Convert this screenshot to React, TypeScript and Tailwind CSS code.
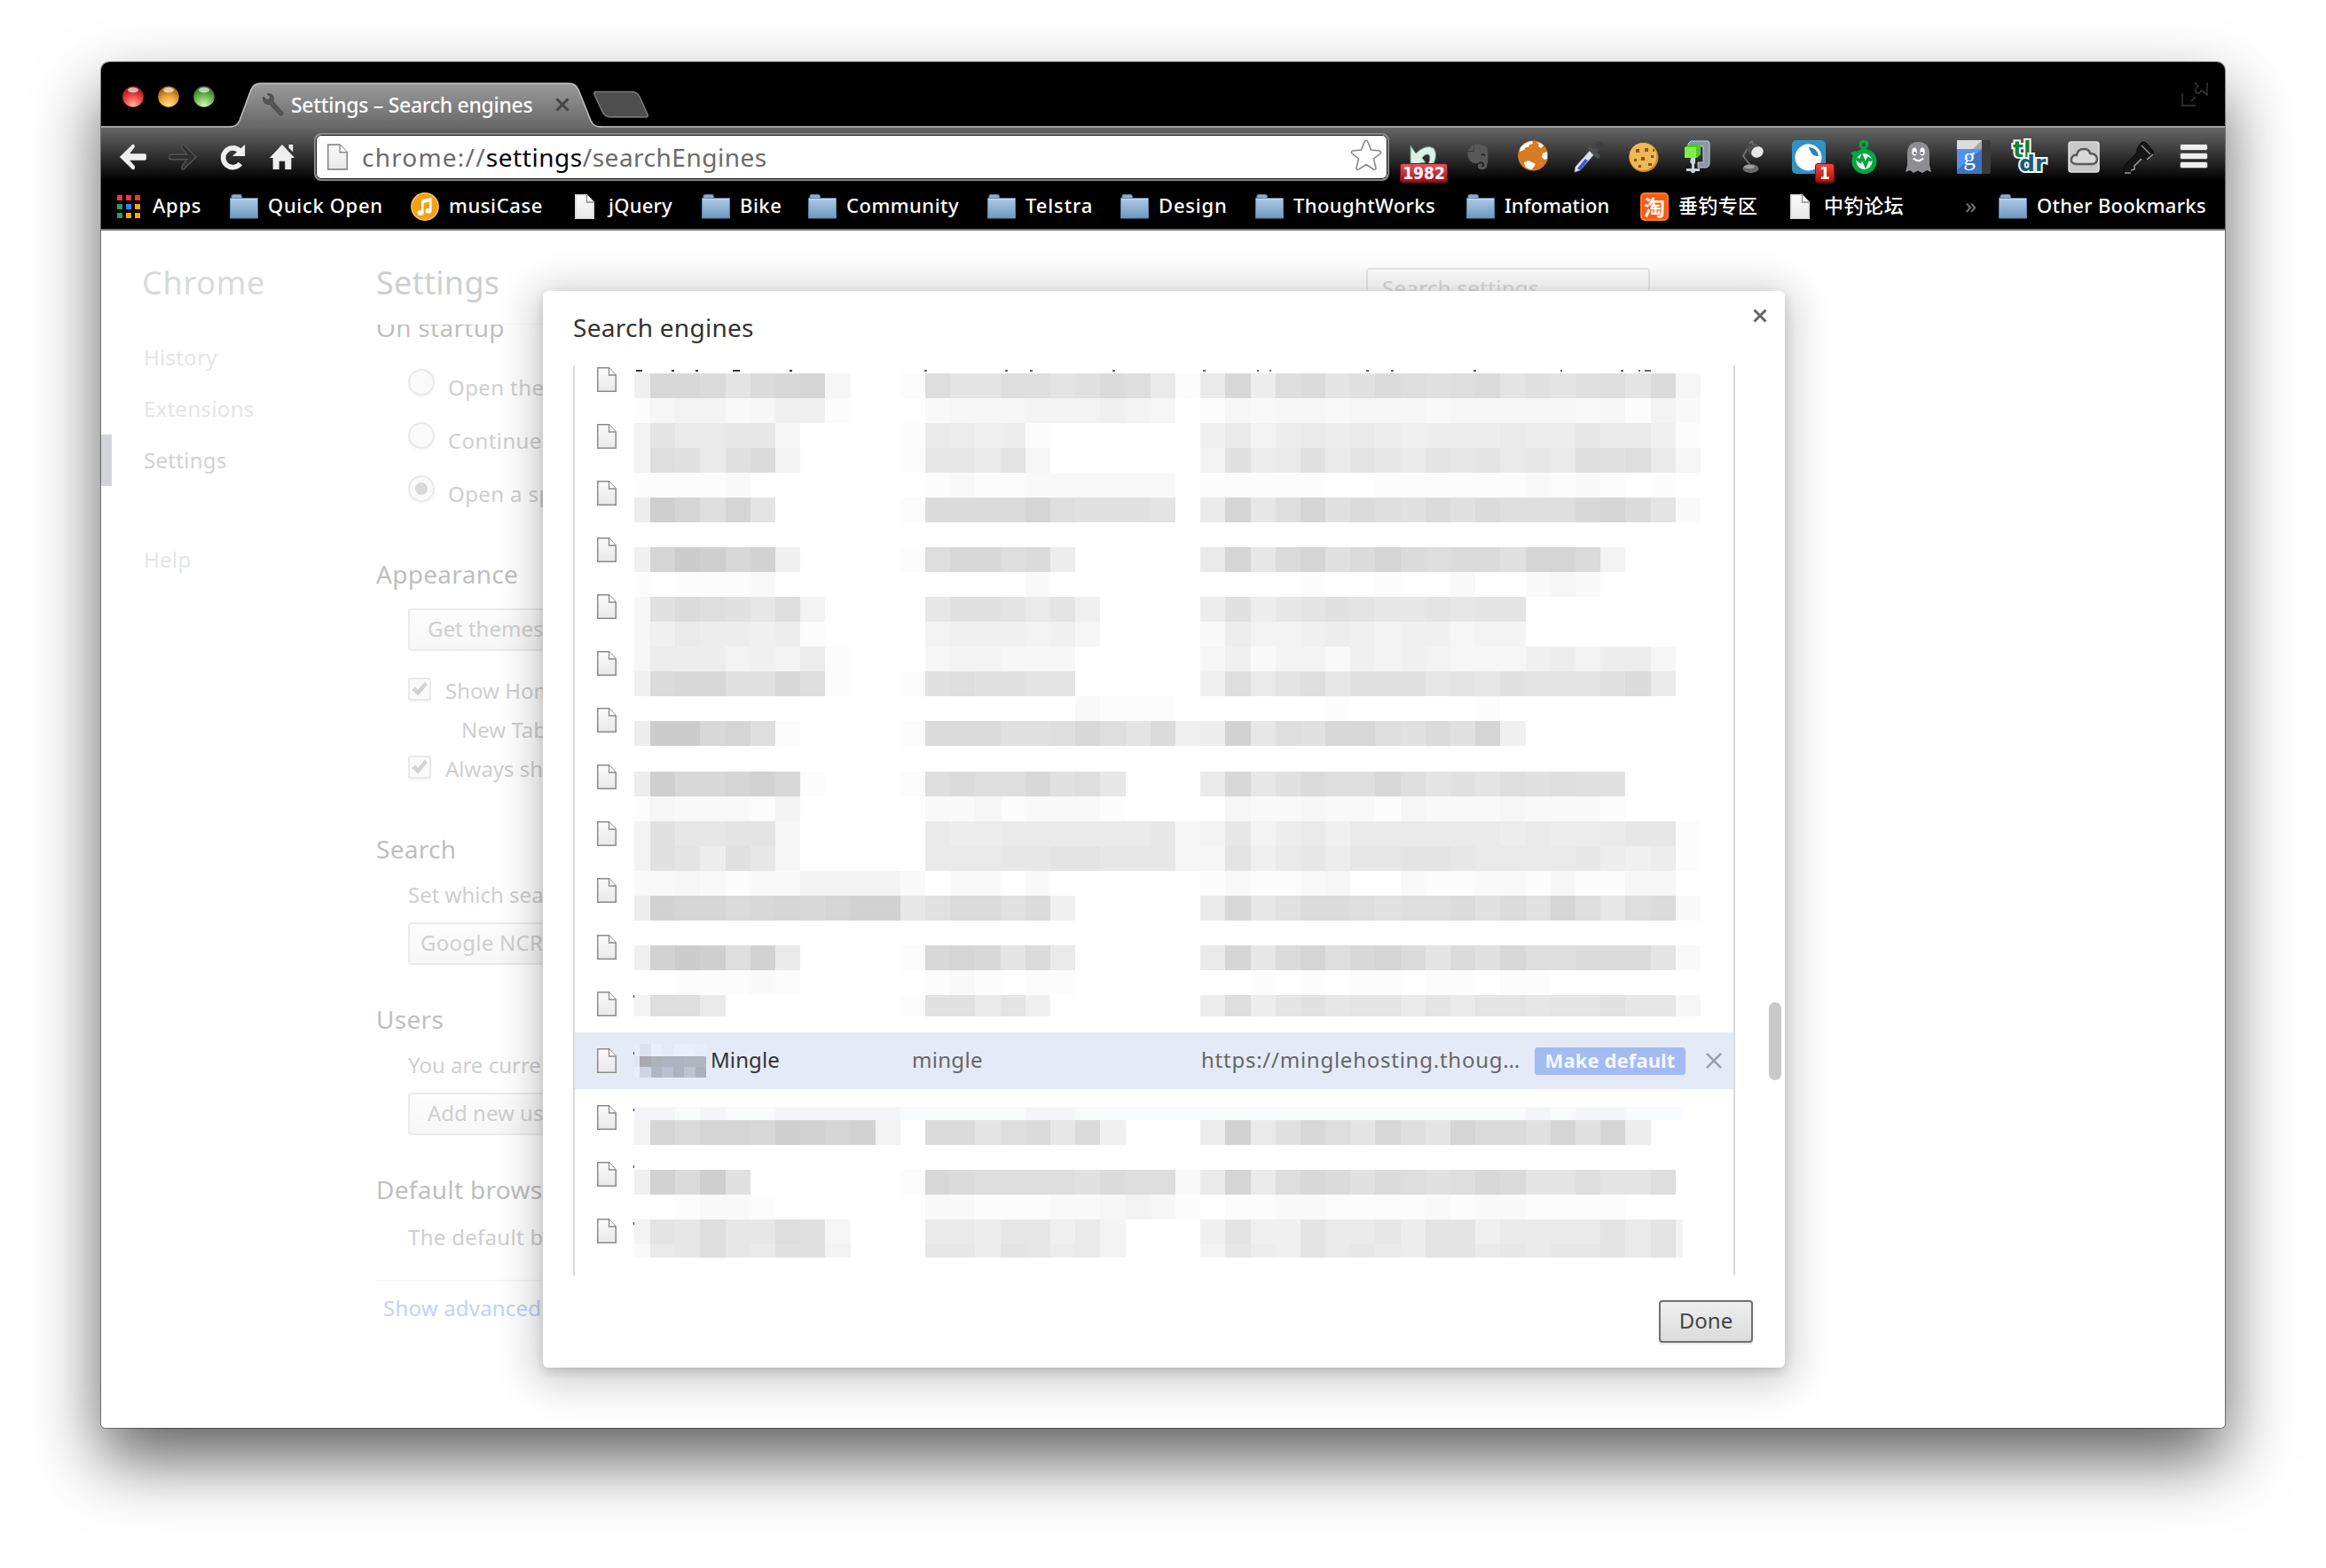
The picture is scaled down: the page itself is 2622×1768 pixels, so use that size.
import React from "react";

function T({ t, c = "" }: { t: string; c?: string }) {
  return <span className={"whitespace-pre " + c}>{t}</span>;
}

/* Pixelated block data: one character per cell, darker as the index grows. */
const PALETTE = "0123456789abcdefgh";
const cellColor = (ch: string) => {
  if (ch === "x") return "#f7fafe";
  if (ch === "y") return "#f3f5f9";
  const v = 255 - 3 * PALETTE.indexOf(ch);
  return `rgb(${v},${v},${v})`;
};
const BLANK = "0".repeat(43);
const M1 = [
  "5ddc9cde3001b99bb9acb717d6bc9acbabc9a9ab9c3",
  "1344235510002333444543013233233323333323142",
  "4977883000017656100000057467676566676687751",
  "4ba7ac400001887930000004a67a7987989787bab73",
  "1111200000001211222222011111001111112121010",
  "6gebe9000001ccccebaaa907e8beacbacacbbbdec92",
  BLANK,
  "5ehgdf500001bddbc6000007e8ceacecbccaeec4000",
  "1011120000000000200000000001001002002320000",
  "3acba8b400008aa979500006a689a98898990000000",
  "3576656100004555453000026445654553440000000",
  "3666454610003443330000035244254543335646630",
  "5cddaadb1001abaa99000005b79b8aaa898a999ac70",
  "0000000000000000002111000000100000100000000",
  "6hhdeb100001cccaabdb9c56f8baddbacae50000000",
  BLANK,
  "6gddefd10001bcbbdab80007d8acbbdb9a9babaa000",
  "1322214000002231222100003223221322232221000",
  "4a88993000007667777778348467577777767667881",
  "4a96a83000007778899888339578688998777786561",
  "2232122444420220200000012112300211221311330",
  "6feecdedeff8accac5000007d8accbabbcacaeb8bc2",
  BLANK,
  "5fhgbf700001ded9c7000007e8cebdec9cadbbccc92",
  "0011121000001210110000000101011011011000000",
  "4bb700000001aa7950000006b69a89979799899a883",
];
const M2 = [
  "yyxyxxyyyyyxxxxxyyxxxxxxxxxxxxxxxxxxyxyyxxx",
  "4eceedgfef40cc9bc8c50006f7adb9db9eccaeae600",
  BLANK,
  "5fcga0000001dcbbbbacbb27e7bdcacbabdc99b99b0",
  "0012210000002211122343101122111121221111000",
  "498b88ba30007768857400059559778699577779794",
  "278b87aa40008869867400048659787699787889794",
];

function Mosaic({ rows, c, first = "h-[28.04px]" }: { rows: string[]; c: string; first?: string }) {
  return (
    <div className={"absolute overflow-hidden " + c}>
      {rows.map((r, i) => (
        <div key={i} className={"flex " + (i === 0 ? first : "h-[28.04px]")}>
          {r.split("").map((ch, j) => (
            <div key={j} className={"h-full shrink-0 " + (j === 0 ? "w-[18px]" : "w-[28.19px]")} style={{ backgroundColor: cellColor(ch) }} />
          ))}
        </div>
      ))}
    </div>
  );
}

function PageIcon({ c = "w-[22px] h-[28px]", k = "#8b8b8b" }: { c?: string; k?: string }) {
  return (
    <svg viewBox="0 0 22 28" className={"shrink-0 " + c}>
      <defs>
        <linearGradient id="pg" x1="0" y1="0" x2="0" y2="1">
          <stop offset="0" stopColor="#fbfbfb" />
          <stop offset="1" stopColor="#e9e9e9" />
        </linearGradient>
      </defs>
      <path d="M.75 .75H13.5L21.25 9V27.25H.75Z" fill="url(#pg)" stroke={k} strokeWidth="1.5" />
      <path d="M13.5 .75V9H21.25" fill="#fff" stroke="#8b8b8b" strokeWidth="1.3" />
    </svg>
  );
}

function Folder() {
  return (
    <svg viewBox="0 0 32 28" className="h-7 w-8 shrink-0">
      <defs>
        <linearGradient id="fo" x1="0" y1="0" x2="0" y2="1">
          <stop offset="0" stopColor="#b0c9e2" />
          <stop offset="1" stopColor="#6c99c3" />
        </linearGradient>
      </defs>
      <path d="M2 5V2.2Q2 .5 3.7 .5H11.6Q13.3 .5 13.3 2.2V5Z" fill="#8eacca" stroke="#6486a8" />
      <path d="M.5 4.500H31.500V27H.5Z" fill="url(#fo)" stroke="#5e86ae" />
      <path d="M1 5.500H31" stroke="#c9dbed" />
    </svg>
  );
}

function Apps() {
  const cols = ["#f8372f", "#f8372f", "#f8372f", "#2f9e58", "#2f86f6", "#f4a70a", "#2f9e58", "#f4a70a", "#f4a70a"];
  return (
    <div className="grid w-8 shrink-0 grid-cols-[6px_6px_6px] justify-center gap-1">
      {cols.map((k, i) => (
        <div key={i} className="h-[6px]" style={{ backgroundColor: k }} />
      ))}
    </div>
  );
}

function Music() {
  return (
    <svg viewBox="0 0 32 32" className="size-8 shrink-0">
      <circle cx="16" cy="16" r="15.2" fill="#f59f13" stroke="#f8c56a" strokeWidth="1.4" />
      <path d="M12 8.200L23.500 6V20.500H21V10.600L14.500 12V23H12Z" fill="#fff" />
      <ellipse cx="11" cy="23" rx="3.6" ry="2.900" fill="#fff" />
      <ellipse cx="20" cy="20.700" rx="3.600" ry="2.900" fill="#fff" />
    </svg>
  );
}

function Taobao() {
  return (
    <div className="relative flex size-8 shrink-0 items-center justify-center rounded-[5px] border-2 border-[#ff7a3a] bg-[#ff5a0c] font-['Noto_Sans_CJK_SC',sans-serif] text-[24px] leading-none font-bold text-white">
      淘
    </div>
  );
}

const pageMark = (
  <div className="flex w-8 shrink-0 justify-center">
    <PageIcon k="#d8d8d8" />
  </div>
);

const bookmarks = [
  { w: "w-[130px]", i: <Apps />, t: "Apps", k: "tracking-[0.7px]" },
  { w: "w-[204px]", i: <Folder />, t: "Quick Open", k: "tracking-[0.65px]" },
  { w: "w-[180px]", i: <Music />, t: "musiCase", k: "tracking-[0.6px]" },
  { w: "w-[148px]", i: pageMark, t: "jQuery", k: "tracking-[0.22px]" },
  { w: "w-[120px]", i: <Folder />, t: "Bike", k: "tracking-[0.5px]" },
  { w: "w-[202px]", i: <Folder />, t: "Community", k: "tracking-[0.5px]" },
  { w: "w-[150px]", i: <Folder />, t: "Telstra", k: "tracking-[0.9px]" },
  { w: "w-[152px]", i: <Folder />, t: "Design", k: "tracking-[0.8px]" },
  { w: "w-[238px]", i: <Folder />, t: "ThoughtWorks", k: "tracking-[0.4px]" },
  { w: "w-[196px]", i: <Folder />, t: "Infomation", k: "tracking-[0.05px]" },
  { w: "w-[164px]", i: <Taobao />, t: "垂钓专区", k: "tracking-[0.33px]" },
  { w: "w-[201px]", i: pageMark, t: "中钓论坛", k: "tracking-[0.6px]" },
];

const S = "h-[38px] w-[38px]";

const extensions = [
  <svg viewBox="0 0 38 38" className={S}>
    <path d="M4 6L4 28L21 25L17 20Q22 14 25 17Q27 20 24 27H30Q35 15 30 9Q21 4 10 15Z" fill="#dff0e6" stroke="#5d9a7c" strokeWidth="1" />
  </svg>,
  <svg viewBox="0 0 38 38" className={S}>
    <path d="M6 12L13 5V12ZM14 5Q20 3 23 6Q28 6 28.500 9Q30.500 20 28 30Q26 34 21 33Q17 32 18 28Q20 25 23 27V29H21.500Q22 31 24 30Q26 29 24 25Q20 23 18 26Q11 27 8 22Q6 18 6 13H14Z" fill="#585858" />
    <path d="M22 17Q24 14.500 26 18" stroke="#222" strokeWidth="1.500" fill="none" />
  </svg>,
  <svg viewBox="0 0 38 38" className={S}>
    <circle cx="18" cy="17.500" r="17" fill="#d97b22" />
    <path d="M4 8Q10 2 17 1L18 4L14 5L13 8L10 8L8 11L3 13ZM22 2Q27 3 30 6L27 9L24 7L25 5ZM29 15L34 13V21L31 22L28 19ZM8 25L13 23L21 27L17 33Q12 33 9 29Z" fill="#fff" />
  </svg>,
  <svg viewBox="0 0 38 38" className={S}>
    <path d="M4 30L20 12L25 16L9 34L3 36Z" fill="#dfe4ea" stroke="#9aa0a8" strokeWidth=".8" />
    <path d="M6 32L15 21L18 23L9 34Z" fill="#2f5fd6" />
    <path d="M20 9L29 18M25 13L32 5" stroke="#4d4d50" strokeWidth="5" strokeLinecap="round" />
    <circle cx="31" cy="6" r="5" fill="#3f3f42" />
  </svg>,
  <svg viewBox="0 0 38 38" className={S}>
    <circle cx="19" cy="19.500" r="16.500" fill="#c98a22" />
    <circle cx="18" cy="18.500" r="15.500" fill="#efb755" />
    <g fill="#8b5418">
      <rect x="10" y="10" width="4" height="4" /><rect x="20" y="9" width="4" height="4" /><rect x="16" y="19" width="4" height="4" />
      <rect x="27" y="17" width="3" height="3" /><rect x="8" y="21" width="3" height="3" /><rect x="24" y="26" width="4" height="3" /><rect x="13" y="28" width="3" height="3" /><rect x="29" y="10" width="2" height="3" />
    </g>
  </svg>,
  <svg viewBox="0 0 38 38" className={S}>
    <path d="M7 4L10 1H29Q31 1 31 4V26Q31 31 26 31H18V25H24V7H7Z" fill="#8a97a3" stroke="#c7cfd6" strokeWidth="1" />
    <path d="M3 8L8 5H21V16L17 20H3Z" fill="#4fc924" />
    <path d="M3 8H16V20H3Z" fill="#7ef04a" />
    <path d="M10 20H15V26L14 27V32H20V35H15L14 37H11L10 35H5V32H11V27L9 25Z" fill="#c9d3dc" />
  </svg>,
  <svg viewBox="0 0 38 38" className={S}>
    <path d="M14 4L17 1L18 5L25 7M12 9L7 18L15 28" fill="none" stroke="#6f6f6f" strokeWidth="2" />
    <path d="M11 8Q18 3 26 7L18 18Q12 15 11 8Z" fill="#4f4f4f" />
    <ellipse cx="23" cy="13.500" rx="7" ry="6" transform="rotate(-30 23 13.500)" fill="#e8e8e8" />
    <ellipse cx="15.500" cy="32" rx="9" ry="5" fill="#6a6a6a" />
    <ellipse cx="14" cy="30" rx="6" ry="2" fill="#a0a0a0" />
  </svg>,
  <svg viewBox="0 0 38 38" className={S}>
    <rect width="38" height="38" rx="5" fill="#2f93c4" />
    <circle cx="18.500" cy="19.500" r="15" fill="#fff" />
    <path d="M19 8Q28 8 30 18Q22 19 19 8Z" fill="#2f7fb0" />
  </svg>,
  <svg viewBox="0 0 38 38" className={S}>
    <path d="M16 8Q14 1 19 1.500Q24 1 22 8" fill="none" stroke="#0aa543" strokeWidth="3.500" />
    <path d="M4 14L10 12L11 17L7 18Z" fill="#0aa543" />
    <circle cx="19.500" cy="24" r="14" fill="#0aa543" />
    <circle cx="19.500" cy="24" r="9" fill="#e9f7ee" />
    <path d="M11 21L15 24L17 19L21 28L24 21L28 23" fill="none" stroke="#0a9f40" strokeWidth="3.500" />
    <path d="M16 7H22V11H16Z" fill="#0aa543" />
  </svg>,
  <svg viewBox="0 0 38 38" className={S}>
    <path d="M6 14Q7 2 18 2Q30 2 31 14V28L33 36L28 34L23 37L18 34.500L13 37L9 34L4 36L6 28Z" fill="#8d8d92" />
    <ellipse cx="14" cy="13" rx="2.700" ry="4.500" fill="#fff" /><ellipse cx="23" cy="13" rx="2.700" ry="4.500" fill="#fff" />
    <circle cx="14.500" cy="14.500" r="1.300" fill="#555" /><circle cx="22.500" cy="14.500" r="1.300" fill="#555" />
    <path d="M13 20.500Q18.500 26 24 20.500" fill="none" stroke="#fff" strokeWidth="2" />
  </svg>,
  <div className={"relative flex items-end rounded-[2px] bg-[#3c3a3b] pb-[5px] " + S}>
    <svg viewBox="0 0 38 38" className="absolute inset-0 size-full">
      <path d="M0 0H28V38H0Z" fill="#3f73bd" /><path d="M0 10H28L0 34Z" fill="#4f94f5" /><path d="M0 0H28V10H0Z" fill="#dcdcdc" /><path d="M28 0V10H18Z" fill="#a8a8a8" />
    </svg>
    <span className="relative w-7 text-center font-['Liberation_Serif',serif] text-[27px] leading-[28px] text-white">g</span>
  </div>,
  <div className={"relative font-['DejaVu_Sans',sans-serif] text-[25px] leading-none font-bold " + S}>
    <span className="absolute top-[-2px] left-[1px] text-[#157f3b] [-webkit-text-stroke:4px_white] [paint-order:stroke_fill]">tl</span>
    <span className="absolute top-[14px] left-[8px] text-[#185a78] [-webkit-text-stroke:4px_white] [paint-order:stroke_fill]">dr</span>
  </div>,
  <svg viewBox="0 0 38 38" className={S}>
    <rect x="2" y="2" width="34" height="34" rx="3" fill="#c9c9c9" stroke="#e4e4e4" strokeWidth="1.500" />
    <path d="M10 27Q4 26 5 21Q7 16 11 17Q12 10 19 10Q25 10 26 15Q33 15 34 21Q34 27 28 27Z" fill="#d9d9d9" stroke="#5a5a5a" strokeWidth="2.400" />
  </svg>,
  <svg viewBox="0 0 38 38" className={S}>
    <path d="M22 3Q24 1 27 3L35 12Q36 15 34 17L28 22Q25 23 23 20L14 29V32L10 33L8 36H2V30L17 14Q16 9 22 3Z" fill="#151515" stroke="#050505" />
    <path d="M22 6L32 16" stroke="#9a9a9a" strokeWidth="1.200" />
    <path d="M3 37H10M10 34L14 33V29L22 21M28 22L35 16" stroke="#9f9f9f" strokeWidth="1.500" fill="none" />
  </svg>,
  <svg viewBox="0 0 38 38" className={S}>
    <g fill="#efefef" stroke="#555" strokeWidth="1"><rect x="3.500" y="4.500" width="31" height="7" rx="2" /><rect x="3.500" y="14.500" width="31" height="7" rx="2" /><rect x="3.500" y="24.500" width="31" height="7" rx="2" /></g>
  </svg>,
];

function Badge({ t, c }: { t: string; c: string }) {
  return (
    <span className={"absolute top-[114px] z-10 flex h-[22px] items-center justify-center rounded-[3px] border border-[#8a0a16] bg-linear-to-b font-['DejaVu_Sans_Condensed','DejaVu_Sans',sans-serif] text-[19px] font-bold text-white " + c}>{t}</span>
  );
}

function Lights() {
  const l = [
    ["#fb4b46", "#ffb3ac", "#a5201c"],
    ["#f2a437", "#ffe58f", "#a8671a"],
    ["#79c257", "#d5f3b4", "#3f7d2c"],
  ];
  return (
    <div className="flex gap-4">
      {l.map(([a, b, d], i) => (
        <svg key={i} viewBox="0 0 24 24" className="size-6">
          <defs>
            <radialGradient id={"l" + i} cx=".5" cy=".9" r=".75">
              <stop offset="0" stopColor={b} /><stop offset=".55" stopColor={a} /><stop offset="1" stopColor={d} />
            </radialGradient>
          </defs>
          <circle cx="12" cy="12" r="11.800" fill={`url(#l${i})`} />
          <ellipse cx="12" cy="4.500" rx="6" ry="3" fill="#fff" opacity=".65" />
        </svg>
      ))}
    </div>
  );
}

function Cross({ c, k, w = 3 }: { c: string; k: string; w?: number }) {
  return (
    <svg viewBox="0 0 16 16" className={c}>
      <path d="M1.500 1.500L14.500 14.500M14.500 1.500L1.500 14.500" stroke={k} strokeWidth={w} />
    </svg>
  );
}

function Radio({ on }: { on?: boolean }) {
  return (
    <span className="mt-[9px] mr-[15px] flex size-[30px] shrink-0 items-center justify-center rounded-full border-2 border-[#e9e9e9] bg-[#fafafa] shadow-[0_2px_2px_#f6f6f6]">
      {on && <span className="size-[14px] rounded-full bg-[#d9d9d9]" />}
    </span>
  );
}

function Check() {
  return (
    <span className="mt-[7px] mr-4 flex size-[26px] shrink-0 items-center justify-center rounded-[3px] border-2 border-[#e9e9e9] bg-[#fafafa] shadow-[0_2px_2px_#f6f6f6]">
      <svg viewBox="0 0 22 22" className="size-[22px]"><path d="M2.500 12L6 8.500L9 12L17 2.500L19.500 6L9.500 18.500Z" fill="#d2d2d2" /></svg>
    </span>
  );
}

const H = "h-[40px] text-[28px] leading-[40px] tracking-[0.3px] text-[#bfbfbf] whitespace-nowrap";
const P = "text-[24px] text-[#cfcfcf] whitespace-nowrap";
const BTN = "ml-[36px] h-12 w-60 rounded-[4px] border-2 border-[#ebebeb] bg-linear-to-b from-[#fdfdfd] to-[#f7f7f7] leading-[42px] ";

/* Tips of the first row's letters that stay visible above the pixelated area: x, width, dark flag. */
const topMarks = [
  [717, 7, 1], [757, 3, 1], [784, 3, 1], [826, 8, 1], [890, 3, 1], [1042, 3, 0], [1133, 3, 0], [1161, 3, 0], [1254, 3, 0],
  [1356, 3, 0], [1417, 2, 0], [1431, 2, 0], [1540, 3, 0], [1568, 3, 0], [1661, 3, 0], [1759, 2, 0], [1827, 3, 0], [1847, 2, 0], [1854, 7, 0],
];

const nameCells = [
  "#e6eefa", "#dbe3ee", "#e8effd", "#e4ebf7", "#e8effd", "#e8effd", "#e6eefa",
  "#dfe7f3", "#a9aab1", "#abb3b8", "#adb3bf", "#adb3bd", "#b0b6c0", "#b1b7c0",
  "#e6eefa", "#cfd5e2", "#b2b6c2", "#bac0cd", "#aeb2be", "#bcc2cf", "#abb1bb",
];

export default function App() {
  return (
    <div className="h-[1768px] w-[2622px] overflow-hidden bg-white px-[114px] pt-[70px] font-['Noto_Sans',sans-serif]">
      <div className="relative flex h-[1540px] w-[2394px] flex-col rounded-t-[9px] rounded-b-[5px] shadow-[0_0_0_1px_rgba(0,0,0,0.4),0_36px_76px_rgba(0,0,0,0.62)]">
        <div className="flex h-[190px] flex-col overflow-hidden rounded-t-[9px] border-b-2 border-[#777] bg-black">
          <div className="relative h-[72px] shrink-0">
            <div className="flex h-full items-start pt-[27px] pl-6"><Lights /></div>
            <svg viewBox="0 0 480 52" className="absolute top-[22px] left-[145px] h-[52px] w-[480px]">
              <defs>
                <linearGradient id="tab" x1="0" y1="0" x2="0" y2="1"><stop offset="0" stopColor="#9b9b9b" /><stop offset="1" stopColor="#676767" /></linearGradient>
              </defs>
              <path d="M0 51Q8 51 11 44L24 9Q27 2 35 2H382Q390 2 393 9L407 44Q410 51 418 51V52H0Z" fill="url(#tab)" />
              <path d="M0 51Q8 51 11 44L24 9Q27 2 35 2H382Q390 2 393 9L407 44Q410 51 418 51" fill="none" stroke="#c2c2c2" strokeWidth="1.500" />
              <path d="M413 11.500H453Q459 11.500 462 17L471 37Q472 40 469 40H429Q423 40 420 34L411 14.500Q410 11.500 413 11.500Z" fill="#4e4e4e" stroke="#7d7d7d" strokeWidth="1.500" />
            </svg>
            <div className="absolute top-[30px] left-[182px] flex h-9 items-center">
              <svg viewBox="0 0 24 26" className="h-[26px] w-6"><path d="M5 1Q10 0 12 4Q13 7 11.500 9L23 22Q23 26 19.500 25L8 12.500Q3 13 1 9Q0 6 1 4L5 8L8.500 6.500L8.500 3.500Z" fill="#555" stroke="#474747" /></svg>
              <span className="pl-[8px] text-[23px] leading-9 tracking-[-0.3px] text-white"><T t="Settings – Search engines" c="font-medium" /></span>
            </div>
            <Cross c="absolute top-[40px] left-[512px] size-4" k="#454545" />
            <svg viewBox="0 0 30 28" className="absolute top-[22px] left-[2345px] h-7 w-[30px]"><path d="M15 1L19 5Q14 8 17 13L20 13L23 10L29 15V1M1 13V27H16M11 22L16 17" fill="none" stroke="#3c3c3c" strokeWidth="1.300" /></svg>
          </div>
          <div className="flex h-[116px] shrink-0 flex-col border-t-2 border-[#a2a2a2] bg-[linear-gradient(#666,#3c3c3c_25px,#000_60px)]">
            <div className="flex h-[66px] shrink-0 items-start pt-[6px] pl-2">
              {[
                <path key="a" d="M2 17L17 2Q20 1 20 5L14 13H32Q34 13 34 17Q34 21 32 21H14L20 28Q21 33 17 32Z" fill="#efefef" />,
                <path key="b" d="M34 17L19 2Q16 2 17 6L23 14H4Q2 14 2 17Q2 20 4 20H23L17 28Q16 32 19 32Z" fill="#2f2f2f" stroke="#555" strokeWidth="1.500" />,
                <path key="c" d="M27 10A11.500 11.500 0 1 0 27.500 25" fill="none" stroke="#efefef" strokeWidth="6" />,
                <path key="d" d="M18 2L33 18H29V32H21.500V22H14.500V32H7V18H3ZM26 2H31V11L26 6Z" fill="#efefef" />,
              ].map((p, i) => (
                <div key={i} className="flex h-[54px] w-14 items-center justify-center">
                  <svg viewBox="0 0 36 34" className="h-[32px] w-[34px]">{p}{i === 2 && <path d="M33 2V16H18Z" fill="#efefef" />}</svg>
                </div>
              ))}
              <div className="ml-2 flex h-[54px] w-[1212px] items-center rounded-[8px] border-2 border-[#8a8a8a] bg-white px-[13px] shadow-[inset_0_0_0_1px_#111]">
                <PageIcon c="h-[30px] w-[23px]" />
                <div className="flex-1 pl-4 text-[28px] leading-[40px] text-[#6b6b6b]">
                  <T t="chrome://" c="tracking-[1.2px]" /><T t="settings" c="tracking-[0.55px] text-black" /><T t="/searchEngines" c="tracking-[0.5px]" />
                </div>
                <svg viewBox="0 0 36 36" className="mr-[-7px] mb-1 size-9"><path d="M18 1.500Q19.500 1.500 20 3L23.500 12L33 13Q35.500 14 34 16L26.500 22L29 32.500Q29 35 26.500 34L18 28.500L9.500 34Q7 35 7 32.500L9.500 22L2 16Q.5 14 3 13L12.500 12L16 3Q16.500 1.500 18 1.500Z" fill="#fff" stroke="#888" strokeWidth="1.600" /></svg>
              </div>
              <div className="ml-2 flex">
                {extensions.map((e, i) => (
                  <div key={i} className="flex h-[54px] w-[62px] items-center justify-center">{e}</div>
                ))}
              </div>
            </div>
            <div className="flex h-[46px] shrink-0 items-center pl-[15px] text-white">
              {bookmarks.map((b) => (
                <div key={b.t} className={"flex shrink-0 items-center " + b.w}>
                  {b.i}
                  <span className="pb-[5px] pl-[11px] font-['Noto_Sans','Noto_Sans_CJK_SC',sans-serif] text-[22px] leading-[32px] font-medium"><T t={b.t} c={b.k} /></span>
                </div>
              ))}
              <span className="w-[39px] pb-1 pl-px text-[26px] text-[#777]">»</span>
              <Folder />
              <span className="pb-[5px] pl-[11px] text-[22px] leading-[32px] font-medium"><T t="Other Bookmarks" c="tracking-[0.3px]" /></span>
            </div>
          </div>
        </div>
        <Badge t="1982" c="left-[1464px] w-[54px] from-[#e8505f] to-[#a00814]" />
        <Badge t="1" c="left-[1932px] w-[22px] from-[#f4453f] to-[#b00808]" />
        <div className="relative flex h-[1350px] overflow-hidden rounded-b-[5px] bg-white">
          <div className="flex w-[310px] shrink-0 flex-col pt-[35px]">
            <span className="pl-[46px] text-[36px] leading-[48px] tracking-[0.7px] text-[#d8dada]"><T t="Chrome" /></span>
            <div className="mt-[31px] flex flex-col text-[24px] leading-[58px] tracking-[0.3px] text-[#e5e5e7]">
              <span className="pl-[48px]"><T t="History" /></span>
              <span className="pl-[48px]"><T t="Extensions" /></span>
              <span className="border-l-[12px] border-[#d3d3da] pl-[36px] text-[#d0d1d6]"><T t="Settings" /></span>
              <span className="mt-[54px] pl-[48px]"><T t="Help" /></span>
            </div>
          </div>
          <div className="flex w-[1436px] flex-col">
            <div className="flex h-[106px] shrink-0 items-start justify-between border-b border-[#f7f7f7]">
              <span className="pt-[35px] text-[36px] leading-[48px] tracking-[0.3px] text-[#cdcfd1]"><T t="Settings" /></span>
              <div className="mt-[42px] h-[50px] w-[320px] rounded-[4px] border-2 border-[#e9e9e9] pl-4 text-[24px] leading-[42px] tracking-[0.33px] text-[#dcdcdc]"><T t="Search settings" /></div>
            </div>
            <div className="flex flex-1 flex-col overflow-hidden">
              <div className={"mt-[-17px] shrink-0 " + H}><T t="On startup" /></div>
              <div className={"mt-[18px] pl-[36px] leading-[60px] tracking-[0.4px] " + P}>
                <div className="flex items-start"><Radio /><T t="Open the New" /></div>
                <div className="flex items-start"><Radio /><T t="Continue" /></div>
                <div className="flex items-start"><Radio on /><T t="Open a spe" /></div>
              </div>
              <div className={"mt-10 shrink-0 " + H}><T t="Appearance" /></div>
              <div className={"mt-[19px] pl-5 " + BTN + P}><T t="Get themes" /></div>
              <div className={"mt-[23px] pl-[36px] leading-[44px] " + P}>
                <div className="flex items-start"><Check /><T t="Show Home" /></div>
                <div className="pl-[60px]"><T t="New Tab" /></div>
                <div className="flex items-start"><Check /><T t="Always show" /></div>
              </div>
              <div className={"mt-12 " + H}><T t="Search" /></div>
              <div className={"mt-[10px] pl-[36px] leading-[44px] " + P}><T t="Set which sear" /></div>
              <div className={"mt-[9px] pl-3 tracking-[0.26px] " + BTN + P}><T t="Google NCR" /></div>
              <div className={"mt-[41px] " + H}><T t="Users" /></div>
              <div className={"mt-[10px] pl-[36px] leading-[44px] " + P}><T t="You are curren" /></div>
              <div className={"mt-[9px] pl-5 " + BTN + P}><T t="Add new use" /></div>
              <div className={"mt-[41px] " + H}><T t="Default brows" /></div>
              <div className={"mt-3 pl-[36px] leading-[44px] tracking-[0.3px] " + P}><T t="The default br" /></div>
              <div className="mt-[26px] h-[2px] shrink-0 bg-[#f6f6f6]" />
              <div className="mt-2 pl-2 text-[24px] leading-[44px] tracking-[0.2px] whitespace-nowrap text-[#c3d2f6]"><T t="Show advanced" /></div>
            </div>
          </div>

          <div className="absolute top-[68px] left-[498px] flex h-[1214px] w-[1400px] flex-col rounded-[6px] bg-white shadow-[0_8px_46px_10px_rgba(0,0,0,0.2),0_4px_12px_rgba(0,0,0,0.15)]">
            <div className="flex h-[84px] shrink-0 items-start justify-between pt-[21px] pr-5 pl-[34px]">
              <span className="text-[28px] leading-[40px] tracking-[0.27px] text-[#333]"><T t="Search engines" /></span>
              <Cross c="mt-[-1px] size-4" k="#666" />
            </div>
            <div className="relative ml-[34px] h-[1026px] w-[1310px] shrink-0 overflow-hidden border-x-2 border-[#d9d9d9]">
              <div className="mt-[-16px] flex flex-col">
                {Array.from({ length: 16 }, (_, k) => (
                  <div key={k} className={"relative flex h-16 items-center pl-[25px] " + (k === 12 ? "bg-[#e4ebf7]" : "")}>
                    <PageIcon />
                    {k >= 11 && <span className="absolute top-[22px] left-[66px] h-[3px] w-px bg-[#432]" />}
                    {k === 12 && (
                      <div className="flex flex-1 items-center text-[24px] leading-[44px] text-[#666]">
                        <div className="mr-[5px] ml-5 grid grid-cols-[6px_repeat(6,12.500px)] grid-rows-[14px_12px_12px]">
                          {nameCells.map((k2, i) => (
                            <div key={i} style={{ backgroundColor: k2 }} />
                          ))}
                        </div>
                        <span className="w-[227px] pb-[2px] tracking-[0.1px] text-[#333]"><T t="Mingle" /></span>
                        <span className="w-[326px] pb-[2px] tracking-[0.3px]"><T t="mingle" /></span>
                        <span className="w-[376px] pb-[2px] tracking-[0.75px]"><T t="https://minglehosting.thoug…" /></span>
                        <span className="h-[31px] w-[170px] shrink-0 rounded-[3px] bg-[#a3bbf3] text-center text-[22px] leading-[29px] font-bold text-[#f4f8ff]"><T t="Make default" c="tracking-[0.1px]" /></span>
                        <Cross c="ml-[22px] size-5" k="#9a9fa8" w={2} />
                      </div>
                    )}
                  </div>
                ))}
              </div>
              {topMarks.map(([x, w, d]) => (
                <span key={x} className="absolute top-[5px] h-[2px]" style={{ left: x - 648, width: w, backgroundColor: d ? "#333" : "#666" }} />
              ))}
              <Mosaic rows={M1} c="top-[9px] left-[67px] h-[725px] w-[1202px]" />
              <Mosaic rows={M2} c="top-[836px] left-[67px] h-[170px] w-[1182px]" first="h-[15px]" />
            </div>
            <div className="mt-7 mr-9 flex justify-end">
              <div className="h-12 w-[106px] rounded-[4px] border-2 border-[#707070] bg-linear-to-b from-[#efefef] to-[#dcdcdc] text-center text-[24px] leading-[42px] text-[#444] shadow-[0_2px_2px_#e6e6e6]"><T t="Done" /></div>
            </div>
            <div className="absolute top-[802px] right-1 h-[88px] w-[14px] rounded-full bg-[#c9c9c9]" />
          </div>
        </div>
      </div>
    </div>
  );
}
